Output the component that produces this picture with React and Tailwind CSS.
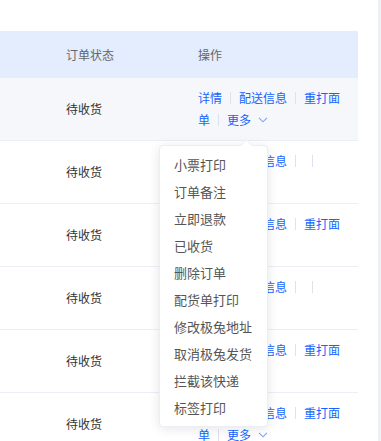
import React from "react";

const FONT = { fontFamily: '"Noto Sans CJK SC", "Noto Sans", sans-serif' };

function Sep() {
  return <span className="inline-block w-px h-[12px] bg-[#dce3ee] mx-[8px]" />;
}

function Chevron() {
  return (
    <svg width="10" height="6" viewBox="0 0 10 6" className="ml-[7px]" fill="none">
      <path d="M1 0.8L5 4.8L9 0.8" stroke="#7fa4f5" strokeWidth="1.1" />
    </svg>
  );
}

function Actions({ variant }) {
  return (
    <div className="flex flex-col text-[12px] text-[#1664ff] leading-[22px]">
      <div className="flex items-center h-[22px]">
        <span>详情</span>
        <Sep />
        <span>配送信息</span>
        <Sep />
        {variant === "empty" ? <span className="w-0" /> : <span>重打面</span>}
        {variant === "empty" ? <Sep /> : null}
      </div>
      <div className="flex items-center h-[22px]">
        <span>单</span>
        <Sep />
        <span>更多</span>
        <Chevron />
      </div>
    </div>
  );
}

function Row({ hover, variant }) {
  return (
    <div
      className={`flex items-center h-[63px] border-b border-[#ebeef5] ${hover ? "bg-[#f5f7fa]" : "bg-white"}`}
    >
      <div className="w-[198px] pl-[66px] text-[12px] text-[#333]">待收货</div>
      <div className="flex-1 pb-px">
        <Actions variant={variant} />
      </div>
    </div>
  );
}

const menu = [
  "小票打印",
  "订单备注",
  "立即退款",
  "已收货",
  "删除订单",
  "配货单打印",
  "修改极兔地址",
  "取消极兔发货",
  "拦截该快递",
  "标签打印",
];

export default function App() {
  return (
    <div className="relative w-[381px] h-[441px] overflow-hidden bg-white flex" style={FONT}>
      <div className="w-[358px] pt-[31px]">
        <div className="flex items-center h-[47px] bg-[#e3edfd] text-[12px] text-[#666]">
          <div className="w-[198px] pl-[66px]">订单状态</div>
          <div className="flex-1">操作</div>
        </div>
        <Row hover />
        <Row variant="empty" />
        <Row />
        <Row variant="empty" />
        <Row />
        <Row />
      </div>
      <div className="flex-1" />
      <div className="w-[3px] bg-[#eef0f4]" />

      <div className="absolute left-[159px] top-[145px] w-[109px] h-[282px] bg-white rounded-[4px] border border-[#ebeef5] shadow-[0_2px_12px_0_rgba(0,0,0,0.1)] py-[5px]">
        <div className="absolute left-[82px] top-[-5px] w-[9px] h-[9px] bg-white rotate-45 border-l border-t border-[#ebeef5]" />
        {menu.map((m) => (
          <div key={m} className="h-[27px] leading-[27px] pl-[14px] text-[13px] text-[#555]">
            {m}
          </div>
        ))}
      </div>
    </div>
  );
}
